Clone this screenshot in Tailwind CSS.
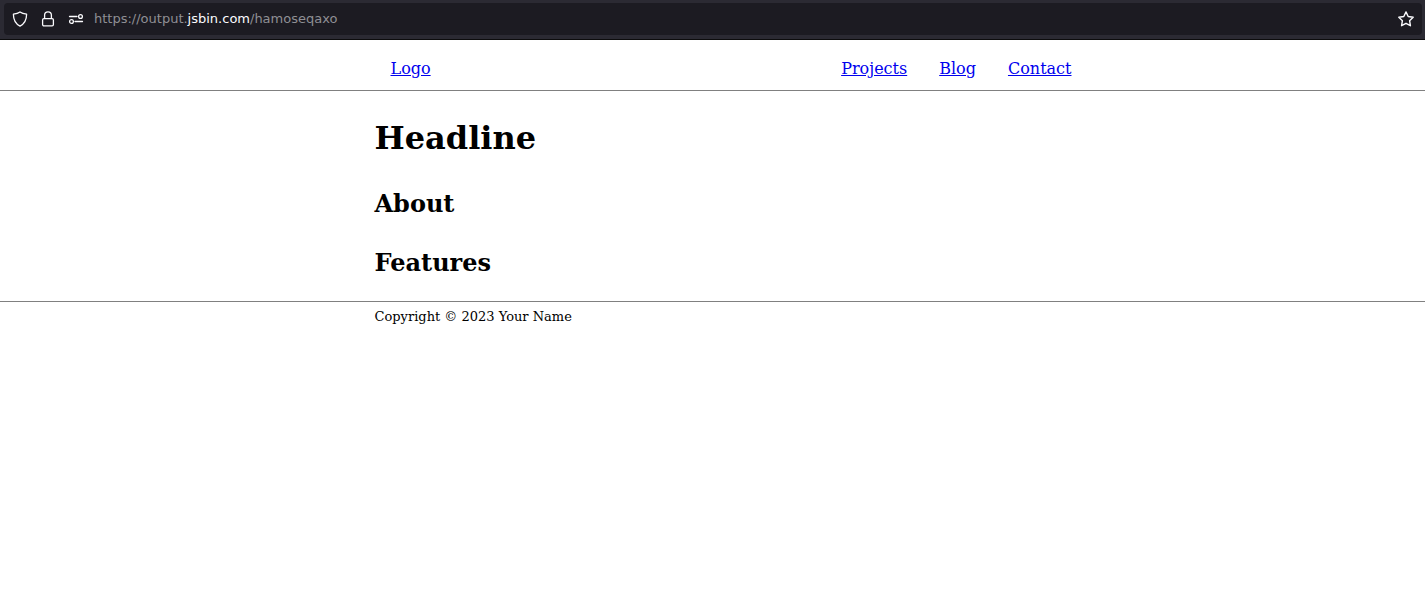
<!DOCTYPE html>
<html lang="en">
<head>
<meta charset="utf-8">
<meta name="viewport" content="width=device-width, initial-scale=1">
<title>Headline</title>
<script src="https://cdn.jsdelivr.net/npm/@tailwindcss/browser@4"></script>
</head>
<body class="min-h-screen bg-white font-['DejaVu_Serif',serif] text-base text-black">
  <!-- Browser address bar -->
  <div class="border-b border-[#0c0c0d] bg-[#2b2a33] pt-[3px] pr-[3px] pb-1 pl-1">
    <div class="flex h-8 items-center rounded bg-[#1c1b22] px-2 text-[#fbfbfe]">
      <button type="button" aria-label="Tracking protection" class="mr-3 size-4">
        <svg viewBox="0 0 16 16" class="size-4" fill="none" stroke="currentColor" stroke-width="1.3" stroke-linejoin="round"><path d="M8 .9C6.4 2.100 3.700 2.900 1.400 3.200c0 5.300 1.700 9.300 6.600 11.900 4.900-2.600 6.600-6.600 6.600-11.900C12.300 2.900 9.600 2.100 8 .9Z"/></svg>
      </button>
      <button type="button" aria-label="Connection secure" class="mr-3 size-4">
        <svg viewBox="0 0 16 16" class="size-4" fill="none" stroke="currentColor" stroke-width="1.3"><rect x="2.600" y="7.600" width="10.800" height="7.300" rx="1.300"/><path d="M4.600 7.600V4.200a3.400 3.400 0 0 1 6.800 0v3.400"/></svg>
      </button>
      <button type="button" aria-label="Site permissions" class="mr-[10px] size-4">
        <svg viewBox="0 0 16 16" class="size-4" fill="none" stroke="currentColor" stroke-width="1.3" stroke-linecap="round"><path d="M1.500 5.500h7.500M7 10.500h7.500"/><circle cx="12.500" cy="5.500" r="1.900"/><circle cx="3.500" cy="10.500" r="1.900"/></svg>
      </button>
      <div role="textbox" aria-label="Address" contenteditable="true" spellcheck="false" class="min-w-0 flex-1 truncate font-['DejaVu_Sans',sans-serif] text-[13px] leading-5 text-[#8f8f94]">https://output.<span class="text-[#fbfbfe]">jsbin.com</span>/hamoseqaxo</div>
      <button type="button" aria-label="Bookmark this page" class="size-4">
        <svg viewBox="0 0 16 16" class="size-4" fill="none" stroke="currentColor" stroke-width="1.4" stroke-linejoin="round"><path d="m8 .9 2.200 4.600 5 .7-3.600 3.500.8 5L8 12.300l-4.400 2.400.8-5L.8 6.200l5-.7Z"/></svg>
      </button>
    </div>
  </div>

  <header class="border-b border-[#808080]">
    <div class="mx-auto max-w-[676px]">
      <nav class="-mr-[37px] flex items-center justify-between px-4 pt-[17px] pb-[9px] leading-6">
        <a href="#" class="text-[#0000ee] underline">Logo</a>
        <div class="flex gap-8">
          <a href="#projects" class="text-[#0000ee] underline">Projects</a>
          <a href="#blog" class="text-[#0000ee] underline">Blog</a>
          <a href="#contact" class="text-[#0000ee] underline">Contact</a>
        </div>
      </nav>
    </div>
  </header>

  <main class="mx-auto flex max-w-[676px] flex-col gap-[31px] pt-[26px] pb-6">
    <h1 class="text-[32px] leading-[42px] font-bold">Headline</h1>
    <h2 id="about" class="text-2xl leading-7 font-bold">About</h2>
    <h2 id="features" class="text-2xl leading-7 font-bold">Features</h2>
  </main>

  <footer class="border-t border-[#808080]">
    <div class="mx-auto max-w-[676px] py-[5px] text-[13px] leading-5">Copyright © 2023 Your Name</div>
  </footer>
</body>
</html>
